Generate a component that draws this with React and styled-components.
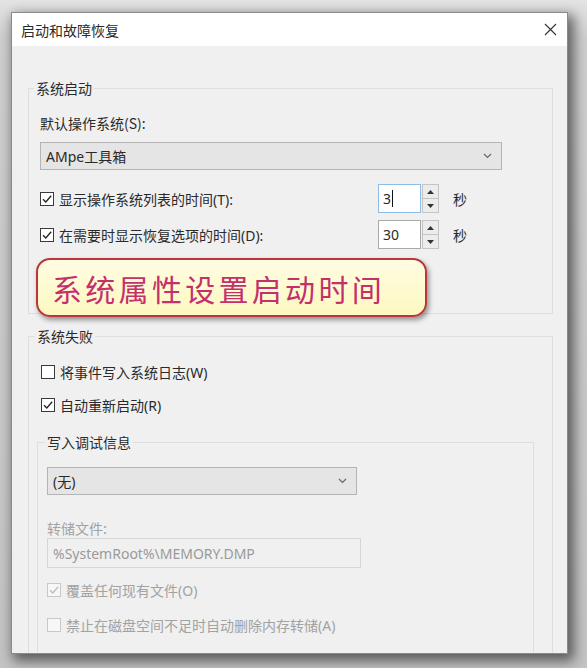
import React from "react";
import styled, { createGlobalStyle } from "styled-components";

const GlobalStyle = createGlobalStyle`
  html, body {
    margin: 0;
    padding: 0;
  }
  body {
    background: #d2d2d2;
    font-family: "Noto Sans", "Noto Sans CJK SC", sans-serif;
    color: #1b1b1b;
  }
`;

const Frame = styled.div`
  box-sizing: border-box;
  height: 668px;
  padding: 12px 19px 0 11px;
  overflow: hidden;
  background: linear-gradient(to bottom, #e4e4e4 0px, #cfcfcf 40px, #c4c4c4 100%);
`;

const Dialog = styled.div`
  box-sizing: border-box;
  width: 557px;
  height: 642px;
  border: 1px solid #8a8a8a;
  background: #f0f0f0;
  display: flex;
  flex-direction: column;
  overflow: hidden;
  box-shadow: 4px 5px 12px 2px rgba(0, 0, 0, 0.55);
`;

const TitleBar = styled.div`
  height: 33px;
  flex: none;
  background: #ffffff;
  display: flex;
  align-items: center;
  justify-content: space-between;
  padding: 0 10px 0 9px;
  font-size: 14px;
  font-family: "Noto Sans CJK SC", sans-serif;
  color: #2a2a2a;
`;

const Body = styled.div`
  position: relative;
  flex: 1;
  padding: 0 14px 0 16px;
  overflow: hidden;
`;

const Group = styled.fieldset`
  margin: ${(p) => p.$top}px ${(p) => p.$right || 0}px 0 ${(p) => p.$left || 0}px;
  padding: 0;
  min-width: 0;
  border: 1px solid #dedede;
`;

const Legend = styled.legend`
  margin-left: ${(p) => p.$offset}px;
  padding: 0 2px;
  font-size: 14px;
  line-height: 18px;
  font-family: "Noto Sans CJK SC", sans-serif;
  color: #2a2a2a;
`;

const GroupContent = styled.div`
  padding: ${(p) => p.$pad};
  display: flex;
  flex-direction: column;
`;

const FieldLabel = styled.div`
  font-size: 14px;
  line-height: ${(p) => p.$lh || 20}px;
  margin-top: ${(p) => p.$top || 0}px;
  color: ${(p) => (p.$disabled ? "#a2a2a2" : "#2a2a2a")};
  font-family: "Noto Sans CJK SC", sans-serif;
`;

const Select = styled.div`
  box-sizing: border-box;
  width: ${(p) => p.$width}px;
  height: 28px;
  margin-top: ${(p) => p.$top || 0}px;
  border: 1px solid #b4b4b4;
  background: #e5e5e5;
  display: flex;
  align-items: center;
  justify-content: space-between;
  padding: 0 9px 0 5px;
  font-size: 14px;
  font-family: "Noto Sans", "Noto Sans CJK SC", sans-serif;
  color: #2a2a2a;
`;

const TextBox = styled.div`
  box-sizing: border-box;
  width: 314px;
  height: 30px;
  margin-top: 1px;
  border: 1px solid #d6d6d6;
  background: #f0f0f0;
  display: flex;
  align-items: center;
  padding: 0 5px;
  font-size: 14px;
  font-family: "Noto Sans", "Noto Sans CJK SC", sans-serif;
  color: #9a9a9a;
`;

const SpinRow = styled.div`
  display: grid;
  grid-template-columns: 338px 43px 18px auto;
  align-items: center;
  margin-top: ${(p) => p.$top}px;
`;

const SpinInput = styled.div`
  box-sizing: border-box;
  height: 29px;
  border: 1px solid ${(p) => (p.$focus ? "#8fbce6" : "#a9a9a9")};
  background: #fff;
  display: flex;
  align-items: center;
  padding: 0 4px;
  font-size: 14px;
  font-family: "Noto Sans", sans-serif;
  color: #2a2a2a;
`;

const Caret = styled.span`
  display: inline-block;
  width: 1px;
  height: 17px;
  background: #111;
  margin-left: 1px;
`;

const Spinner = styled.div`
  box-sizing: border-box;
  height: 29px;
  margin-left: 1px;
  border: 1px solid #c4c4c4;
  background: #ececec;
  display: flex;
  flex-direction: column;
`;

const SpinHalf = styled.div`
  flex: 1;
  display: flex;
  align-items: center;
  justify-content: center;
  border-top: ${(p) => (p.$lower ? "1px solid #c4c4c4" : "none")};
`;

const Unit = styled.span`
  margin-left: 14px;
  font-size: 14px;
  font-family: "Noto Sans CJK SC", sans-serif;
  color: #2a2a2a;
`;

const CheckRow = styled.div`
  display: flex;
  align-items: center;
  gap: 5px;
  height: 20px;
  margin-top: ${(p) => p.$top || 0}px;
  font-size: 14px;
  font-family: "Noto Sans", "Noto Sans CJK SC", sans-serif;
  color: ${(p) => (p.$disabled ? "#a2a2a2" : "#2a2a2a")};
`;

const Box = styled.span`
  box-sizing: border-box;
  width: 14px;
  height: 14px;
  flex: none;
  border: 1px solid ${(p) => (p.$disabled ? "#c8c8c8" : "#3a3a3a")};
  background: ${(p) => (p.$disabled ? "#f7f7f7" : "#fff")};
  display: flex;
  align-items: center;
  justify-content: center;
`;

const InnerGroup = styled(Group)``;

const Callout = styled.div`
  position: absolute;
  left: 24px;
  top: 212px;
  box-sizing: border-box;
  width: 391px;
  height: 59px;
  border: 2px solid #b8363c;
  border-radius: 14px;
  background: linear-gradient(to bottom, #fffde2, #fdf8c0);
  box-shadow: 2px 3px 5px rgba(0, 0, 0, 0.4);
  display: flex;
  align-items: center;
  padding-left: 14px;
  font-family: "Noto Sans CJK SC", sans-serif;
  font-size: 30px;
  font-weight: 400;
  letter-spacing: 3.3px;
  color: #c3306c;
  white-space: nowrap;
`;

const Chevron = () => (
  <svg width="9" height="6" viewBox="0 0 9 6">
    <path d="M1 1 L4.5 4.5 L8 1" fill="none" stroke="#666" strokeWidth="1.2" />
  </svg>
);

const CloseIcon = () => (
  <svg width="13" height="13" viewBox="0 0 13 13">
    <path d="M1 1 L12 12 M12 1 L1 12" stroke="#333" strokeWidth="1.1" />
  </svg>
);

const Tri = ({ down }) => (
  <svg width="7" height="4" viewBox="0 0 7 4">
    <path d={down ? "M0 0 L7 0 L3.5 4 Z" : "M0 4 L7 4 L3.5 0 Z"} fill="#333" />
  </svg>
);

const Checkbox = ({ checked, disabled, label, top }) => (
  <CheckRow $top={top} $disabled={disabled}>
    <Box $disabled={disabled}>
      {checked && (
        <svg width="12" height="12" viewBox="0 0 12 12">
          <path
            d="M2 6.2 L4.8 9 L10.2 2.8"
            fill="none"
            stroke={disabled ? "#bdbdbd" : "#222"}
            strokeWidth="1.3"
          />
        </svg>
      )}
    </Box>
    <span>{label}</span>
  </CheckRow>
);

const Spin = ({ value, focus }) => (
  <>
    <SpinInput $focus={focus}>
      {value}
      {focus && <Caret />}
    </SpinInput>
    <Spinner>
      <SpinHalf>
        <Tri />
      </SpinHalf>
      <SpinHalf $lower>
        <Tri down />
      </SpinHalf>
    </Spinner>
    <Unit>秒</Unit>
  </>
);

export default function App() {
  return (
    <>
      <GlobalStyle />
      <Frame>
        <Dialog>
          <TitleBar>
            <span>启动和故障恢复</span>
            <CloseIcon />
          </TitleBar>
          <Body>
            <Group $top={33}>
              <Legend $offset={5}>系统启动</Legend>
              <GroupContent $pad="16px 11px 64px">
                <FieldLabel>默认操作系统(S):</FieldLabel>
                <Select $width={462} $top={9}>
                  <span>AMpe工具箱</span>
                  <Chevron />
                </Select>
                <SpinRow $top={14}>
                  <Checkbox checked label="显示操作系统列表的时间(T):" />
                  <Spin value="3" focus />
                </SpinRow>
                <SpinRow $top={7}>
                  <Checkbox checked label="在需要时显示恢复选项的时间(D):" />
                  <Spin value="30" />
                </SpinRow>
              </GroupContent>
            </Group>

            <Group $top={13}>
              <Legend $offset={6}>系统失败</Legend>
              <GroupContent $pad="17px 12px 0 12px">
                <Checkbox label="将事件写入系统日志(W)" />
                <Checkbox checked top={13} label="自动重新启动(R)" />
                <InnerGroup $top={18} $right={6} $left={-4}>
                  <Legend $offset={7}>写入调试信息</Legend>
                  <GroupContent $pad="16px 9px 60px">
                    <Select $width={310}>
                      <span>(无)</span>
                      <Chevron />
                    </Select>
                    <FieldLabel $top={24} $lh={18} $disabled>
                      转储文件:
                    </FieldLabel>
                    <TextBox>%SystemRoot%\MEMORY.DMP</TextBox>
                    <Checkbox checked disabled top={12} label="覆盖任何现有文件(O)" />
                    <Checkbox disabled top={15} label="禁止在磁盘空间不足时自动删除内存转储(A)" />
                  </GroupContent>
                </InnerGroup>
              </GroupContent>
            </Group>

            <Callout>系统属性设置启动时间</Callout>
          </Body>
        </Dialog>
      </Frame>
    </>
  );
}
